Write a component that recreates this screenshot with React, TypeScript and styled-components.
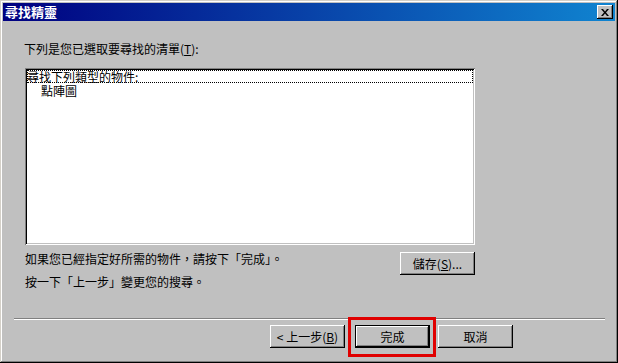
import React from "react";
import styled, { createGlobalStyle } from "styled-components";

const Global = createGlobalStyle`
  html, body { margin: 0; padding: 0; background: #c0c0c0; }
  body { font-family: "Noto Sans CJK TC", "Liberation Sans", sans-serif; font-size: 12px; }
`;

const Window = styled.div`
  position: relative;
  width: 618px;
  height: 363px;
  box-sizing: border-box;
  padding: 3px;
  background: #c0c0c0;
  box-shadow: inset -1px -1px 0 #000, inset 1px 1px 0 #d4d0c8, inset -2px -2px 0 #808080,
    inset 2px 2px 0 #fff;
  display: flex;
  flex-direction: column;
`;

const TitleBar = styled.div`
  height: 18px;
  display: flex;
  align-items: center;
  justify-content: space-between;
  padding: 0 2px 0 2px;
  background: linear-gradient(to right, #000080, #1084d0);
  color: #fff;
  font-weight: bold;
  font-size: 13px;
  line-height: 18px;
`;

const CloseBtn = styled.div`
  width: 16px;
  height: 14px;
  box-sizing: border-box;
  background: #c0c0c0;
  box-shadow: inset -1px -1px 0 #000, inset 1px 1px 0 #fff, inset -2px -2px 0 #808080;
  display: flex;
  align-items: center;
  justify-content: center;
`;

const Content = styled.div`
  flex: 1;
  display: flex;
  flex-direction: column;
  color: #000;
`;

const Body = styled.div`
  padding: 21px 0 0 21px;
  display: flex;
  flex-direction: column;
  width: 451px;
`;

const Label = styled.div`
  line-height: 14px;
  height: 14px;
  margin-bottom: 12px;
`;

const ListBox = styled.div`
  margin-left: 1px;
  width: 450px;
  height: 177px;
  box-sizing: border-box;
  background: #fff;
  padding: 2px;
  box-shadow: inset 1px 1px 0 #808080, inset -1px -1px 0 #fff, inset 2px 2px 0 #000,
    inset -2px -2px 0 #c0c0c0;
`;

const Item = styled.div<{ $indent?: number; $focus?: boolean }>`
  height: 13px;
  line-height: 13px;
  padding-left: ${(p) => p.$indent ?? 0}px;
  outline: ${(p) => (p.$focus ? "1px dotted #000" : "none")};
  outline-offset: -1px;
  white-space: nowrap;
  margin-bottom: 1px;
`;

const InfoRow = styled.div`
  margin-top: 7px;
  margin-left: 1px;
  display: flex;
  justify-content: space-between;
  align-items: flex-start;
`;

const InfoText = styled.div`
  display: flex;
  flex-direction: column;
  gap: 9px;
`;

const Line = styled.div`
  line-height: 14px;
  height: 14px;
`;

const Button = styled.div<{ $default?: boolean }>`
  width: 75px;
  height: 23px;
  box-sizing: border-box;
  background: #c0c0c0;
  display: flex;
  align-items: center;
  justify-content: center;
  font-size: 12px;
  box-shadow: ${(p) =>
    p.$default
      ? "inset 0 0 0 1px #000, inset -2px -2px 0 #000, inset 2px 2px 0 #fff, inset -3px -3px 0 #808080"
      : "inset -1px -1px 0 #000, inset 1px 1px 0 #fff, inset -2px -2px 0 #808080"};
`;

const Footer = styled.div`
  margin-top: auto;
  display: flex;
  flex-direction: column;
  padding-bottom: 12px;
`;

const Separator = styled.div`
  margin: 0 10px 0 11px;
  height: 2px;
  border-top: 1px solid #808080;
  border-bottom: 1px solid #fff;
  box-sizing: border-box;
`;

const ButtonRow = styled.div`
  margin-top: 5px;
  display: flex;
  padding-left: 267px;
`;

const Gap = styled.div<{ $w: number }>`
  width: ${(p) => p.$w}px;
`;

const Highlight = styled.div`
  position: absolute;
  left: 348px;
  top: 317px;
  width: 88px;
  height: 40px;
  box-sizing: border-box;
  border: 3px solid #e00000;
  pointer-events: none;
`;

const U = styled.span`
  text-decoration: underline;
`;

export default function App() {
  return (
    <>
      <Global />
      <Window>
        <TitleBar>
          <span>尋找精靈</span>
          <CloseBtn>
            <svg width="8" height="7" viewBox="0 0 8 7">
              <path d="M0 0h2l2 2.5L6 0h2L5 3.5 8 7H6L4 4.5 2 7H0l3-3.5z" fill="#000" />
            </svg>
          </CloseBtn>
        </TitleBar>
        <Content>
          <Body>
            <Label>
              下列是您已選取要尋找的清單(<U>T</U>):
            </Label>
            <ListBox>
              <Item $focus>尋找下列類型的物件:</Item>
              <Item $indent={14}>點陣圖</Item>
            </ListBox>
            <InfoRow>
              <InfoText>
                <Line>如果您已經指定好所需的物件，請按下「完成」。</Line>
                <Line>按一下「上一步」變更您的搜尋。</Line>
              </InfoText>
              <Button>
                儲存(<U>S</U>)...
              </Button>
            </InfoRow>
          </Body>
          <Footer>
            <Separator />
            <ButtonRow>
              <Button>
                &lt; 上一步(<U>B</U>)
              </Button>
              <Gap $w={10} />
              <Button $default>完成</Button>
              <Gap $w={8} />
              <Button>取消</Button>
            </ButtonRow>
          </Footer>
        </Content>
        <Highlight />
      </Window>
    </>
  );
}
